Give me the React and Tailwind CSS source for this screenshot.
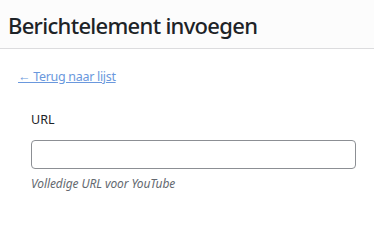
export default function App() {
  return (
    <div className="w-[374px] h-[212px] bg-white overflow-hidden font-['Noto_Sans',sans-serif] text-[#1d2327]">
      <header className="h-[49px] bg-[#fcfcfc] border-b border-[#dcdcde] flex items-center px-[8px]">
        <h1 className="text-[22px] leading-none font-medium tracking-[-0.7px] pt-[2px]">Berichtelement invoegen</h1>
      </header>
      <div className="px-[18px] pt-[14px]">
        <a href="#" className="text-[12.5px] leading-[18px] text-[#6a98dd] underline tracking-[-0.3px]">
          ← Terug naar lijst
        </a>
        <div className="pl-[13px] pt-[24px]">
          <label className="block text-[12.5px] leading-[18px]">URL</label>
          <input type="text" className="mt-[11px] block w-full h-[29px] rounded-[4px] border border-[#8c8f94] bg-white" />
          <p className="mt-[7px] text-[12px] leading-[16px] italic text-[#646970] tracking-[-0.1px]">Volledige URL voor YouTube</p>
        </div>
      </div>
    </div>
  );
}
